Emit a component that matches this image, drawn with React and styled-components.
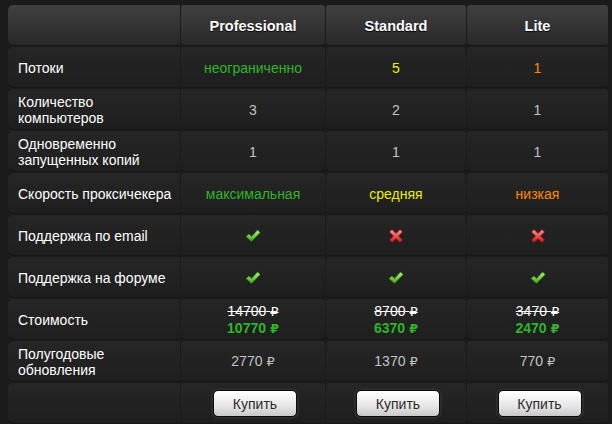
import React from "react";
import styled, { createGlobalStyle } from "styled-components";

const FONT = `"Liberation Sans", Arial, "DejaVu Sans", sans-serif`;

const GlobalStyle = createGlobalStyle`
  html, body {
    margin: 0;
    padding: 0;
    background: #1b1b1b;
    font-family: ${FONT};
  }
`;

const Page = styled.div`
  padding: 5px 4px 0 8px;
  height: 424px;
  overflow: hidden;
  box-sizing: border-box;
`;

const Table = styled.div`
  display: grid;
  grid-template-columns: 172px 144px 140px 141px;
  grid-auto-rows: 41px;
  column-gap: 1px;
  row-gap: 1px;
  width: 600px;
`;

const Cell = styled.div`
  display: flex;
  flex-direction: column;
  align-items: ${(p) => (p.$label ? "flex-start" : "center")};
  justify-content: center;
  padding: ${(p) => (p.$label ? "0 0 0 10px" : "0")};
  border-radius: ${(p) => (p.$label ? "5px 0 0 5px" : "3px")};
  background: linear-gradient(#262626, #1e1e1e);
  box-shadow: inset 0 -1px 0 #161616;
  color: ${(p) => p.$color || "#c4c4c4"};
  font-family: ${FONT};
  font-size: 14px;
  line-height: 16px;
  text-align: ${(p) => (p.$label ? "left" : "center")};
`;

const HeadCell = styled(Cell)`
  background: linear-gradient(#404040, #282828);
  color: #fff;
  font-weight: bold;
  font-size: 14.5px;
  text-shadow: 0 1px 1px #000;
`;

const LabelText = styled.span`
  color: #fff;
`;

const OldPrice = styled.span`
  color: #fff;
  text-decoration: line-through;
`;

const NewPrice = styled.span`
  color: #2fb52a;
  font-weight: bold;
`;

const PlainPrice = styled.span`
  font-family: ${FONT};
  color: #c4c4c4;
`;

const Rub = styled.span`
  font-family: "DejaVu Sans", sans-serif;
  font-size: 13px;
`;

const BuyButton = styled.button`
  width: 84px;
  height: 27px;
  margin-left: 4px;
  border: 1px solid #0c0c0c;
  border-radius: 5px;
  background: linear-gradient(#ffffff, #e6e6e6 60%, #c9c9c9);
  box-shadow: 0 0 0 2px #2c2c2c;
  color: #2a2a2a;
  font-family: ${FONT};
  font-size: 14px;
  cursor: pointer;
`;

const GREEN = "#2fb52a";
const YELLOW = "#eeee00";
const ORANGE = "#ff8a00";

const Price = ({ value }) => (
  <>
    {value} <Rub>₽</Rub>
  </>
);

const Check = () => (
  <svg width="16" height="14" viewBox="0 0 16 14">
    <defs>
      <linearGradient id="cg" x1="0" y1="0" x2="0" y2="1">
        <stop offset="0" stopColor="#b6f57a" />
        <stop offset="1" stopColor="#3aa316" />
      </linearGradient>
    </defs>
    <path
      d="M1 7.5 L4 5 L6.5 7.5 L12.5 1 L15.2 3.5 L6.5 12.5 Z"
      fill="url(#cg)"
      stroke="#2d7d12"
      strokeWidth="0.6"
      strokeLinejoin="round"
    />
  </svg>
);

const Cross = () => (
  <svg width="16" height="16" viewBox="0 0 16 16">
    <defs>
      <linearGradient id="xg" x1="0" y1="0" x2="0" y2="1">
        <stop offset="0" stopColor="#ff9a9a" />
        <stop offset="1" stopColor="#d81010" />
      </linearGradient>
    </defs>
    <path
      d="M1.5 4 L4 1.5 L8 5.5 L12 1.5 L14.5 4 L10.5 8 L14.5 12 L12 14.5 L8 10.5 L4 14.5 L1.5 12 L5.5 8 Z"
      fill="url(#xg)"
      stroke="#a00a0a"
      strokeWidth="0.6"
      strokeLinejoin="round"
    />
  </svg>
);

const rows = [
  { label: "Потоки", values: [["неограниченно", GREEN], ["5", YELLOW], ["1", ORANGE]] },
  { label: "Количество компьютеров", values: [["3"], ["2"], ["1"]] },
  { label: "Одновременно запущенных копий", values: [["1"], ["1"], ["1"]] },
  {
    label: "Скорость проксичекера",
    values: [["максимальная", GREEN], ["средняя", YELLOW], ["низкая", ORANGE]],
  },
  { label: "Поддержка по email", icons: ["check", "cross", "cross"] },
  { label: "Поддержка на форуме", icons: ["check", "check", "check"] },
  {
    label: "Стоимость",
    prices: [
      ["14700", "10770"],
      ["8700", "6370"],
      ["3470", "2470"],
    ],
  },
  { label: "Полугодовые обновления", updates: ["2770", "1370", "770"] },
];

const plans = ["Professional", "Standard", "Lite"];

export default function App() {
  return (
    <Page>
      <GlobalStyle />
      <Table>
        <HeadCell $label />
        {plans.map((p) => (
          <HeadCell key={p}>{p}</HeadCell>
        ))}

        {rows.map((row) => (
          <React.Fragment key={row.label}>
            <Cell $label>
              <LabelText>{row.label}</LabelText>
            </Cell>
            {row.values &&
              row.values.map(([text, color], i) => (
                <Cell key={i} $color={color}>
                  {text}
                </Cell>
              ))}
            {row.icons &&
              row.icons.map((ic, i) => (
                <Cell key={i}>{ic === "check" ? <Check /> : <Cross />}</Cell>
              ))}
            {row.prices &&
              row.prices.map(([oldP, newP], i) => (
                <Cell key={i}>
                  <OldPrice>
                    <Price value={oldP} />
                  </OldPrice>
                  <NewPrice>
                    <Price value={newP} />
                  </NewPrice>
                </Cell>
              ))}
            {row.updates &&
              row.updates.map((v, i) => (
                <Cell key={i}>
                  <PlainPrice>
                    <Price value={v} />
                  </PlainPrice>
                </Cell>
              ))}
          </React.Fragment>
        ))}

        <Cell $label />
        {plans.map((p) => (
          <Cell key={p}>
            <BuyButton>Купить</BuyButton>
          </Cell>
        ))}
      </Table>
    </Page>
  );
}
